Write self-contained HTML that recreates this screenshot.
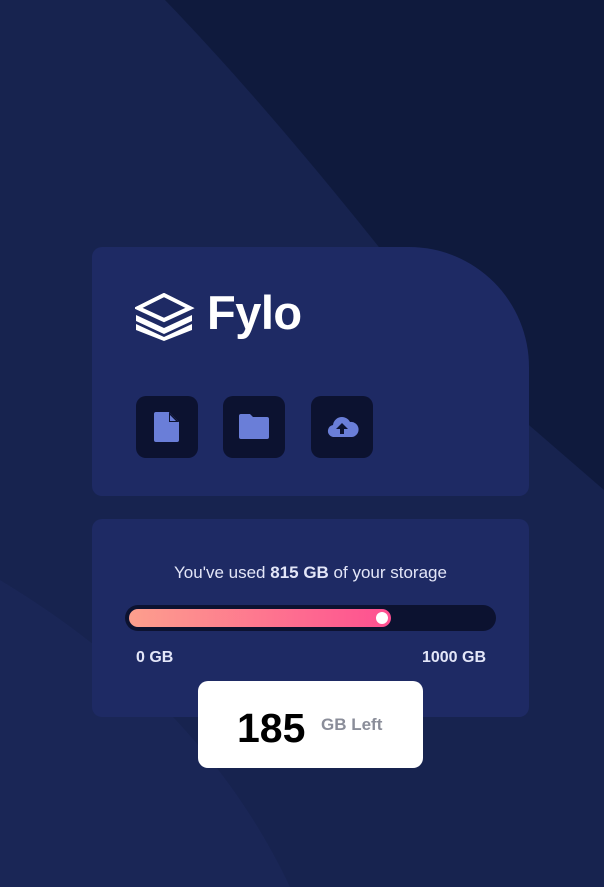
<!DOCTYPE html>
<html><head><meta charset="utf-8"><style>
html,body{margin:0;padding:0}
body{width:604px;height:887px;position:relative;overflow:hidden;background:#0f1a3d;font-family:"Liberation Sans",sans-serif}
.bg{position:absolute;left:0;top:0}
.card1{position:absolute;left:92px;top:247px;width:437px;height:249px;background:#1e2a64;border-radius:10px 120px 10px 10px}
.card2{position:absolute;left:92px;top:519px;width:437px;height:198px;background:#1e2a64;border-radius:10px}
.ib{position:absolute;top:149px;width:62px;height:62px;background:#0c1230;border-radius:10px}
.logo{position:absolute;left:43px;top:46px}
.fylo{position:absolute;left:115px;top:38px;color:#fff;font-weight:bold;font-size:47px;letter-spacing:-0.5px}
.txt{position:absolute;top:44px;left:0;width:100%;text-align:center;color:#e3e6f8;font-size:17px}
.bar{position:absolute;left:33px;top:86px;width:371px;height:26px;background:#0c1230;border-radius:13px}
.fill{position:absolute;left:4px;top:4px;width:262px;height:18px;border-radius:9px;background:linear-gradient(90deg,#fd9f8d,#fe4f91)}
.dot{position:absolute;right:3px;top:3px;width:12px;height:12px;border-radius:6px;background:#fff}
.lab{position:absolute;top:130px;color:#e3e6f8;font-weight:bold;font-size:16px}
.left{position:absolute;left:198px;top:681px;width:225px;height:87px;background:#fff;border-radius:10px}
.n{position:absolute;left:39px;top:24px;font-size:41px;font-weight:bold;color:#000}
.g{position:absolute;left:123px;top:34px;font-size:17px;font-weight:bold;color:#8a8d99}
</style></head><body>
<svg class="bg" width="604" height="887"><path d="M0 0H165C300 140 420 300 500 400L604 490V887H0Z" fill="#17234f"/><path d="M0 580C150 670 240 780 290 887H0Z" fill="#1a2656"/></svg>
<div class="card1">
<svg class="logo" width="60" height="48" viewBox="0 0 60 48"><path d="M29 2L55 15L29 27L3 15Z" fill="none" stroke="#fff" stroke-width="4"/><path d="M1 22L29 35L57 22V28L29 41L1 28Z" fill="#fff"/><path d="M1 31V37L29 48L57 37V31L29 44Z" fill="#fff"/></svg>
<div class="fylo">Fylo</div>
<div class="ib" style="left:44px"><svg width="62" height="62"><path d="M18 18a2 2 0 0 1 2-2H33L43 26V44a2 2 0 0 1-2 2H20a2 2 0 0 1-2-2Z" fill="#6a7ed8"/><path d="M33 16L43 26H33Z" fill="#0c1230"/><path d="M34 19L40 25H34Z" fill="#6a7ed8"/></svg></div>
<div class="ib" style="left:131px"><svg width="62" height="62"><path d="M16 20a2 2 0 0 1 2-2H27L30 21H44a2 2 0 0 1 2 2V41a2 2 0 0 1-2 2H18a2 2 0 0 1-2-2Z" fill="#6a7ed8"/></svg></div>
<div class="ib" style="left:219px"><svg width="62" height="62"><path d="M22 41a6 6 0 0 1-5-7 6 6 0 0 1 5-5 9 9 0 0 1 17-3 7.5 7.5 0 0 1 2 15Z" fill="#6a7ed8"/><path d="M31 27L25 33H29V38H33V33H37Z" fill="#0c1230"/></svg></div>
</div>
<div class="card2">
<div class="txt">You've used <b>815 GB</b> of your storage</div>
<div class="bar"><div class="fill"><div class="dot"></div></div></div>
<div class="lab" style="left:44px">0 GB</div>
<div class="lab" style="right:43px">1000 GB</div>
</div>
<div class="left"><div class="n">185</div><div class="g">GB Left</div></div>
</body></html>
